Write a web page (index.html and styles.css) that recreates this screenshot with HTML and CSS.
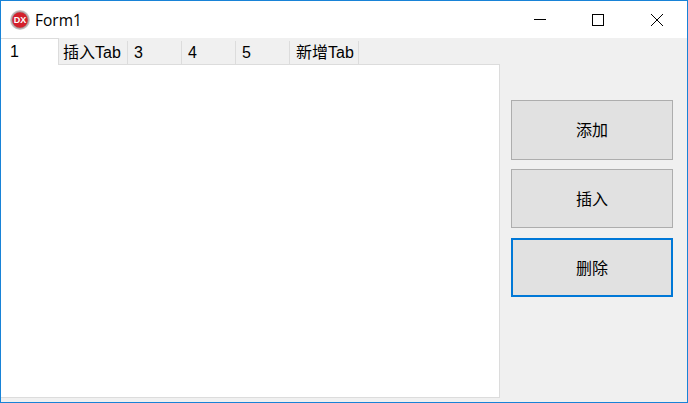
FILE: index.html
```html
<!DOCTYPE html>
<html lang="zh">
<head>
    <meta charset="UTF-8">
    <title>Form1</title>
    <link rel="stylesheet" href="styles.css">
</head>
<body>
    <div class="window">
        <!-- Title bar -->
        <div class="titlebar">
            <svg class="app-icon" width="20" height="20" viewBox="0 0 20 20">
                <defs>
                    <radialGradient id="ring">
                        <stop offset="80%" stop-color="#a89a9a"/>
                        <stop offset="100%" stop-color="#d8d4d4"/>
                    </radialGradient>
                </defs>
                <circle cx="10" cy="10" r="10" fill="url(#ring)"/>
                <circle cx="10" cy="10" r="7.8" fill="#d4202c"/>
                <text x="10" y="13" text-anchor="middle" class="app-icon-text">DX</text>
            </svg>
            <span class="title">Form1</span>
            <div class="controls">
                <svg class="control" width="59" height="37" viewBox="0 0 59 37"><path d="M24 18.5H36" stroke="#000" fill="none"/></svg>
                <svg class="control" width="59" height="37" viewBox="0 0 59 37"><rect x="23.5" y="13.5" width="11" height="11" stroke="#000" fill="none"/></svg>
                <svg class="control" width="59" height="37" viewBox="0 0 59 37"><path d="M23 13L35 25M35 13L23 25" stroke="#000" fill="none"/></svg>
            </div>
        </div>

        <!-- Form body -->
        <div class="form">
            <div class="tab-control">
                <div class="tabs">
                    <div class="tab active">1</div>
                    <div class="tab tab-wide tab-insert">插入Tab</div>
                    <div class="tab">3</div>
                    <div class="tab">4</div>
                    <div class="tab">5</div>
                    <div class="tab tab-wide">新增Tab</div>
                    <div class="tab-fill"></div>
                </div>
                <div class="tab-page"></div>
            </div>
            <div class="buttons">
                <button class="btn btn-first">添加</button>
                <button class="btn">插入</button>
                <button class="btn focused">删除</button>
            </div>
        </div>
    </div>
</body>
</html>
```

FILE: styles.css
```css
html, body {
    margin: 0;
    padding: 0;
}

body {
    font-family: "Liberation Sans", "Noto Sans CJK SC", sans-serif;
    font-size: 16px;
    color: #000;
    background-color: #f0f0f0;
}

.window {
    width: 688px;
    height: 403px;
    box-sizing: border-box;
    border: 1px solid #1883d7;
    display: flex;
    flex-direction: column;
    overflow: hidden;
}

.titlebar {
    height: 37px;
    flex: none;
    background-color: #fff;
    display: flex;
    align-items: center;
    padding-left: 9px;
}

.app-icon {
    margin-right: 5px;
}

.app-icon-text {
    font-family: "Liberation Sans", sans-serif;
    font-size: 9px;
    font-weight: bold;
    fill: #fff;
}

.title {
    font-family: "Open Sans", sans-serif;
    font-size: 15.5px;
}

.controls {
    margin-left: auto;
    display: flex;
}

.control {
    display: block;
}

.form {
    flex: 1;
    display: flex;
    background-color: #f0f0f0;
}

.tab-control {
    width: 499px;
    height: 360px;
    flex: none;
    display: flex;
    flex-direction: column;
}

.tabs {
    height: 27px;
    flex: none;
    display: flex;
    align-items: flex-end;
}

.tab {
    width: 54px;
    height: 24px;
    box-sizing: border-box;
    padding-left: 6px;
    line-height: 24px;
    border-right: 1px solid #dcdcdc;
    border-bottom: 1px solid #dcdcdc;
    white-space: nowrap;
}

.tab-wide {
    width: 69px;
}

.tab-insert {
    padding-left: 4px;
}

.tab.active {
    width: 58px;
    height: 27px;
    padding-left: 9px;
    line-height: 26px;
    background-color: #fff;
    border-top: 1px solid #dcdcdc;
    border-bottom: none;
}

.tab-fill {
    flex: 1;
    height: 24px;
    box-sizing: border-box;
    border-bottom: 1px solid #dcdcdc;
}

.tab-page {
    height: 333px;
    box-sizing: border-box;
    background-color: #fff;
    border-right: 1px solid #dcdcdc;
    border-bottom: 1px solid #dcdcdc;
}

.buttons {
    display: flex;
    flex-direction: column;
    gap: 10px;
    padding: 62px 0 0 11px;
}

.btn {
    width: 162px;
    height: 59px;
    box-sizing: border-box;
    background-color: #e1e1e1;
    border: 1px solid #adadad;
    border-radius: 0;
    padding: 0 0 1px 0;
    font-family: "Noto Sans CJK SC", sans-serif;
    font-size: 16px;
    color: #000;
}

.btn-first {
    height: 60px;
    margin-bottom: -1px;
    padding-bottom: 3px;
}

.btn.focused {
    border: 2px solid #0078d7;
}
```
